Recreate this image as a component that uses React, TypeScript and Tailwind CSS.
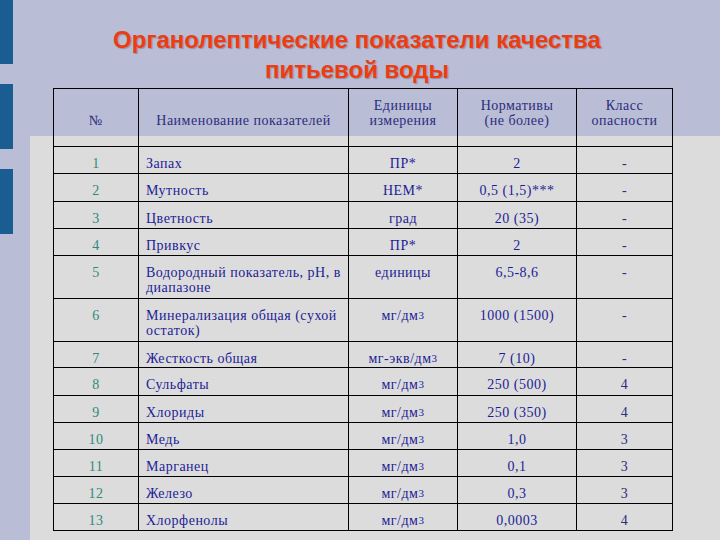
import React from "react";

type Row = { n: string; name: string; unit: React.ReactNode; norm: string; cls: string; h: string };

const M3 = (
  <>
    мг/дм<sup className="text-[11px] relative -top-[1px]">3</sup>
  </>
);

const rows: Row[] = [
  { n: "1", name: "Запах", unit: "ПР*", norm: "2", cls: "-", h: "h-[27px]" },
  { n: "2", name: "Мутность", unit: "НЕМ*", norm: "0,5 (1,5)***", cls: "-", h: "h-[28px]" },
  { n: "3", name: "Цветность", unit: "град", norm: "20 (35)", cls: "-", h: "h-[27px]" },
  { n: "4", name: "Привкус", unit: "ПР*", norm: "2", cls: "-", h: "h-[27px]" },
  { n: "5", name: "Водородный показатель, рН, в диапазоне", unit: "единицы", norm: "6,5-8,6", cls: "-", h: "h-[43px]" },
  { n: "6", name: "Минерализация общая (сухой остаток)", unit: M3, norm: "1000 (1500)", cls: "-", h: "h-[43px]" },
  {
    n: "7",
    name: "Жесткость общая",
    unit: (
      <>
        мг-экв/дм<sup className="text-[11px] relative -top-[1px]">3</sup>
      </>
    ),
    norm: "7 (10)",
    cls: "-",
    h: "h-[26px]",
  },
  { n: "8", name: "Сульфаты", unit: M3, norm: "250 (500)", cls: "4", h: "h-[28px]" },
  { n: "9", name: "Хлориды", unit: M3, norm: "250 (350)", cls: "4", h: "h-[27px]" },
  { n: "10", name: "Медь", unit: M3, norm: "1,0", cls: "3", h: "h-[27px]" },
  { n: "11", name: "Марганец", unit: M3, norm: "0,1", cls: "3", h: "h-[27px]" },
  { n: "12", name: "Железо", unit: M3, norm: "0,3", cls: "3", h: "h-[27px]" },
  { n: "13", name: "Хлорфенолы", unit: M3, norm: "0,0003", cls: "4", h: "h-[27px]" },
];

const serif = "font-['Liberation_Serif','Times_New_Roman',serif]";
const th = `border border-black font-normal align-bottom pb-[18px] text-center ${serif}`;
const td = `border border-black align-top pt-[9px] ${serif}`;

export default function App() {
  return (
    <div className="w-[720px] h-[540px] overflow-hidden bg-[#b9bdd6] flex">
      {/* left decorative bars */}
      <div className="w-[30px] shrink-0 flex flex-col gap-[20px]">
        <div className="w-[13px] h-[64px] bg-[#195d93]" />
        <div className="w-[13px] h-[65px] bg-[#195d93]" />
        <div className="w-[13px] h-[65px] bg-[#195d93]" />
      </div>

      {/* main area */}
      <div className="flex-1 bg-[linear-gradient(to_bottom,transparent_136px,#dcdcdc_136px)] pl-[23px]">
        <h1 className="w-[608px] pt-[25px] h-[88px] text-center font-['Liberation_Sans',Arial,sans-serif] font-bold text-[24px] leading-[30px] text-[#ec3c12] [text-shadow:1px_1px_1px_rgba(90,60,60,0.35)]">
          Органолептические показатели качества
          <br />
          питьевой воды
        </h1>

        <table
          className={`table-fixed border-collapse w-[619px] text-[14px] leading-[15px] tracking-[0.5px] ${serif}`}
        >
          <colgroup>
            <col className="w-[85px]" />
            <col className="w-[210px]" />
            <col className="w-[109px]" />
            <col className="w-[119px]" />
            <col className="w-[96px]" />
          </colgroup>
          <thead>
            <tr className="h-[58px] text-[#2c2c7c] bg-[linear-gradient(to_bottom,transparent_48px,#dcdcdc_48px)]">
              <th className={th}>№</th>
              <th className={th}>Наименование показателей</th>
              <th className={th}>
                Единицы
                <br />
                измерения
              </th>
              <th className={th}>
                Нормативы
                <br />
                (не более)
              </th>
              <th className={th}>
                Класс
                <br />
                опасности
              </th>
            </tr>
          </thead>
          <tbody>
            {rows.map((r) => (
              <tr key={r.n} className={r.h}>
                <td className={`${td} text-center text-[#2f8a7d]`}>{r.n}</td>
                <td className={`${td} pl-[7px] pr-[2px] text-[#1c1c96]`}>{r.name}</td>
                <td className={`${td} text-center text-[#1c1c96]`}>{r.unit}</td>
                <td className={`${td} text-center text-[#1c1c96]`}>{r.norm}</td>
                <td className={`${td} text-center text-[#2c2c7c]`}>{r.cls}</td>
              </tr>
            ))}
          </tbody>
        </table>
      </div>
    </div>
  );
}
